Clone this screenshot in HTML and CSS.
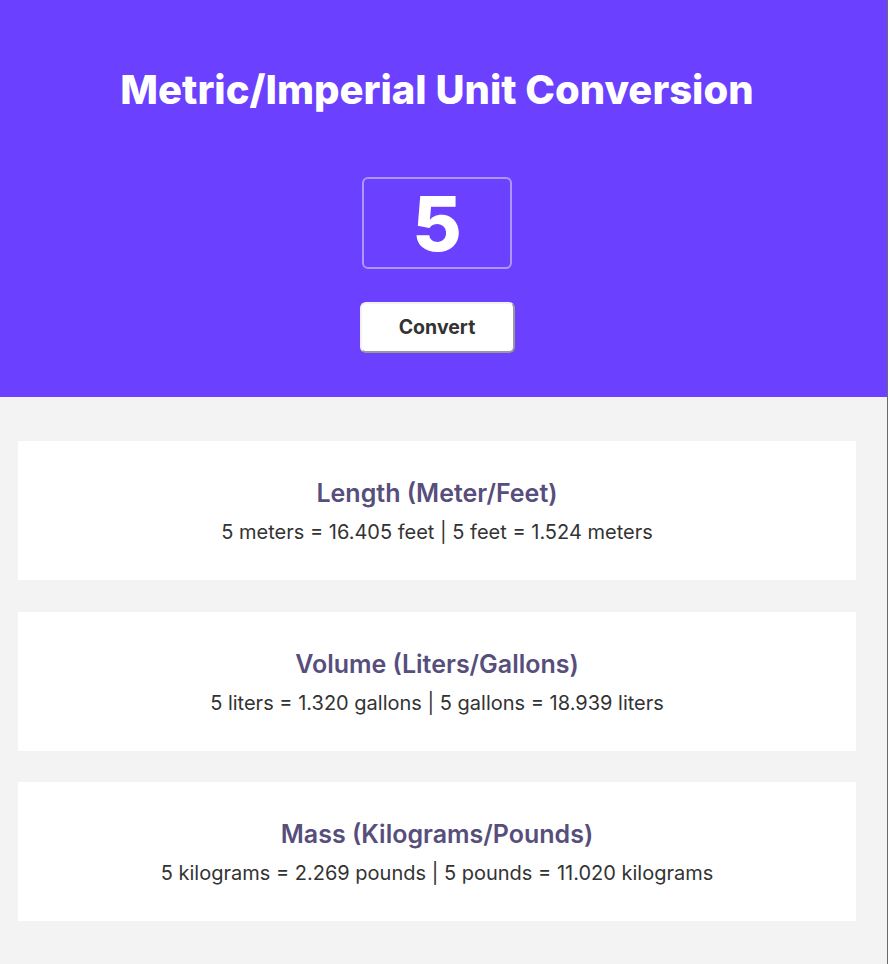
FILE: index.html
```html
<!DOCTYPE html>
<html lang="en">
<head>
<meta charset="utf-8">
<title>Metric/Imperial Unit Conversion</title>
<link rel="stylesheet" href="styles.css">
</head>
<body>
<div class="page">
  <header class="hero">
    <div class="hero-inner">
      <h1 class="title">Metric/Imperial Unit Conversion</h1>
      <div class="num-box">5</div>
      <button class="convert-btn" type="button">Convert</button>
    </div>
  </header>
  <main class="results">
    <section class="card">
      <h2 class="card-title">Length (Meter/Feet)</h2>
      <p class="card-text">5 meters = 16.405 feet | 5 feet = 1.524 meters</p>
    </section>
    <section class="card">
      <h2 class="card-title">Volume (Liters/Gallons)</h2>
      <p class="card-text">5 liters = 1.320 gallons | 5 gallons = 18.939 liters</p>
    </section>
    <section class="card">
      <h2 class="card-title">Mass (Kilograms/Pounds)</h2>
      <p class="card-text">5 kilograms = 2.269 pounds | 5 pounds = 11.020 kilograms</p>
    </section>
  </main>
</div>
</body>
</html>
```
FILE: styles.css
```css
html, body {
  margin: 0;
  padding: 0;
  background: #f3f3f3;
}
body {
  font-family: Inter, "Noto Sans", sans-serif;
}
.page {
  width: 887px;
  min-height: 964px;
  border-right: 1px solid #6a6a6a;
  background: #f3f3f3;
}
.hero {
  background: #6c40ff;
  height: 397px;
}
.hero-inner {
  width: 874px;
  display: flex;
  flex-direction: column;
  align-items: center;
  padding-top: 66px;
}
.title {
  margin: 0;
  color: #fff;
  font-size: 40px;
  line-height: 48px;
  font-weight: 800;
}
.num-box {
  margin-top: 63px;
  width: 146px;
  height: 88px;
  border: 2px solid rgba(255, 255, 255, 0.45);
  border-radius: 6px;
  color: #fff;
  font-size: 76px;
  font-weight: 800;
  line-height: 88px;
  text-align: center;
}
.convert-btn {
  margin-top: 33px;
  width: 155px;
  height: 51px;
  background: #fff;
  border: 2px solid;
  border-color: #f2f2f2 #9a9a9a #9a9a9a #f2f2f2;
  border-radius: 6px;
  font-family: inherit;
  font-size: 19.5px;
  font-weight: 700;
  color: #333;
  padding: 0 0 1px;
}
.results {
  width: 838px;
  padding: 44px 18px 40px;
  display: flex;
  flex-direction: column;
  gap: 31.5px;
}
.card {
  background: #fff;
  height: 139px;
  box-sizing: border-box;
  padding-top: 36px;
  text-align: center;
}
.card-title {
  margin: 0;
  font-size: 25px;
  line-height: 32px;
  font-weight: 600;
  color: #574e7c;
}
.card-text {
  margin: 8px 0 0;
  font-size: 20px;
  line-height: 30px;
  color: #333;
}
```
